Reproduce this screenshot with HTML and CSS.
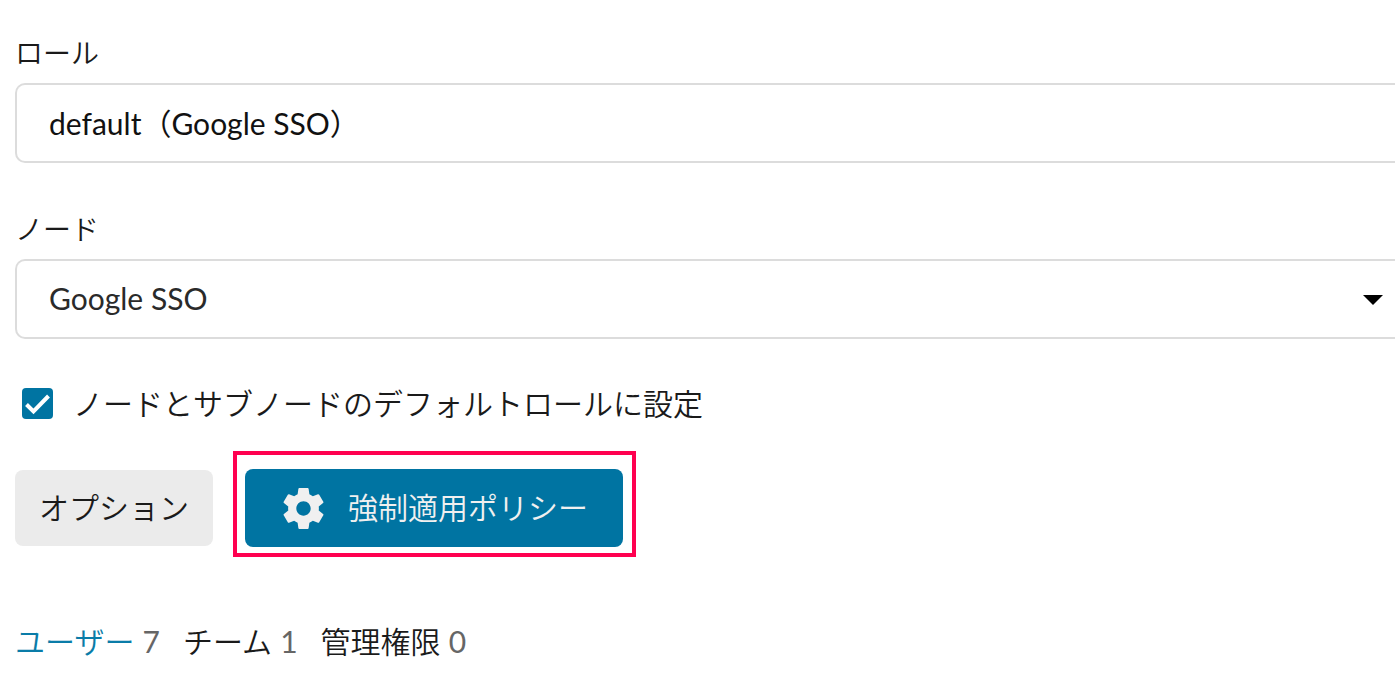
FILE: index.html
```html
<!DOCTYPE html>
<html lang="ja">
<head>
    <meta charset="UTF-8">
    <meta name="viewport" content="width=device-width, initial-scale=1.0">
    <title>ロール</title>
    <link rel="stylesheet" href="styles.css">
</head>
<body>

    <form class="role-form">
        <label class="field-label" for="role">ロール</label>
        <input class="field field-name" type="text" id="role" name="role" value="default（Google SSO）">

        <label class="field-label" for="node">ノード</label>
        <div class="select-wrap">
            <select class="field" id="node" name="node">
                <option value="google">Google SSO</option>
            </select>
            <svg class="arrow" viewBox="0 0 20 10" aria-hidden="true"><path d="M0 0h20L10 10z"/></svg>
        </div>

        <div class="check-row">
            <input type="checkbox" class="check" id="default-role" checked>
            <svg class="tick" viewBox="0 0 31 31" aria-hidden="true"><path d="M4.500 16.500L11.500 23.500L26.500 8"/></svg>
            <label for="default-role">ノードとサブノードのデフォルトロールに設定</label>
        </div>

        <div class="buttons">
            <button type="button" class="btn">オプション</button>
            <div class="highlight">
                <button type="button" class="btn btn-primary">
                    <svg class="gear" viewBox="2 2 20 20" aria-hidden="true">
                        <path d="M19.430 12.980c.04-.32.07-.64.07-.98s-.03-.66-.07-.98l2.110-1.650c.19-.15.24-.42.12-.64l-2-3.460c-.12-.22-.39-.3-.61-.22l-2.490 1c-.52-.4-1.080-.73-1.690-.98l-.38-2.650C14.460 2.180 14.250 2 14 2h-4c-.25 0-.46.18-.49.42l-.38 2.650c-.61.25-1.170.59-1.690.98l-2.490-1c-.23-.09-.49 0-.61.22l-2 3.460c-.13.22-.07.49.12.64l2.110 1.650c-.04.32-.07.65-.07.98s.03.66.07.98l-2.110 1.650c-.19.15-.24.42-.12.64l2 3.460c.12.22.39.3.61.22l2.490-1c.52.4 1.080.73 1.690.98l.38 2.650c.03.24.24.42.49.42h4c.25 0 .46-.18.49-.42l.38-2.650c.61-.25 1.170-.59 1.690-.98l2.490 1c.23.09.49 0 .61-.22l2-3.460c.12-.22.07-.49-.12-.64l-2.110-1.650zM12 15.500c-1.930 0-3.500-1.570-3.500-3.500s1.570-3.500 3.500-3.500 3.500 1.570 3.500 3.500-1.570 3.500-3.500 3.500z"/>
                    </svg>
                    <span class="btn-text">強制適用ポリシー</span>
                </button>
            </div>
        </div>

        <nav class="tabs">
            <a href="#users" class="tab active">ユーザー <span class="count">7</span></a>
            <a href="#teams" class="tab">チーム <span class="count">1</span></a>
            <a href="#admin" class="tab">管理権限 <span class="count">0</span></a>
        </nav>
    </form>

</body>
</html>
```

FILE: styles.css
```css
body {
    font-family: Lato, "Noto Sans CJK JP", sans-serif;
    font-size: 30px;
    font-weight: 350;
    line-height: 40px;
    color: #1a1a1a;
    background-color: #fff;
    margin: 0;
    overflow-x: hidden;
}

.role-form {
    padding: 33px 0 20px 15px;
}

.field-label {
    display: block;
    font-size: 28px;
    margin-bottom: 10px;
}

.field {
    appearance: none;
    display: block;
    width: 100%;
    height: 80px;
    padding: 0 32px 2px;
    box-sizing: border-box;
    border: 2px solid #dcdcdc;
    border-right: none;
    border-radius: 10px 0 0 10px;
    background-color: #fff;
    color: #2a2a2a;
    font-family: inherit;
    font-size: 30px;
    font-weight: 400;
}

.field-name {
    margin-bottom: 46px;
    color: #111;
}

.select-wrap {
    position: relative;
    margin-bottom: 44px;
}

.arrow {
    position: absolute;
    top: 36px;
    right: 12px;
    width: 20px;
    height: 10px;
    pointer-events: none;
}

.check-row {
    position: relative;
    display: flex;
    align-items: center;
    gap: 20px;
    padding-left: 7px;
    margin-bottom: 46px;
}

.check {
    appearance: none;
    width: 31px;
    height: 31px;
    margin: 0;
    border-radius: 4px;
    background-color: #0074a2;
}

.tick {
    position: absolute;
    left: 7px;
    width: 31px;
    height: 31px;
    fill: none;
    stroke: none;
    stroke-width: 4;
    pointer-events: none;
}

.check:checked + .tick {
    stroke: #fff;
}

.buttons {
    display: flex;
    align-items: center;
    gap: 32px;
    margin-bottom: 74px;
}

.btn {
    display: flex;
    align-items: center;
    height: 76px;
    padding: 0 24px 4px;
    border: none;
    border-radius: 8px;
    background-color: #ebebeb;
    color: #1a1a1a;
    font-family: inherit;
    font-size: 30px;
    font-weight: 350;
    cursor: pointer;
}

.btn-primary {
    gap: 24px;
    height: 78px;
    padding: 0 35px 0 38px;
    background-color: #0074a2;
    color: #f0f0f0;
}

.btn-text {
    padding-bottom: 4px;
}

.gear {
    width: 41px;
    height: 41px;
    fill: #f0f0f0;
}

.highlight {
    position: relative;
}

.highlight::after {
    content: "";
    position: absolute;
    inset: -18px -13px -10px -12px;
    border: 4px solid #ff0050;
    pointer-events: none;
}

.tabs {
    display: flex;
    gap: 23px;
}

.tab {
    color: #1a1a1a;
    text-decoration: none;
}

.active {
    color: #0a7ca8;
}

.count {
    color: #666;
    font-weight: 400;
}
```
